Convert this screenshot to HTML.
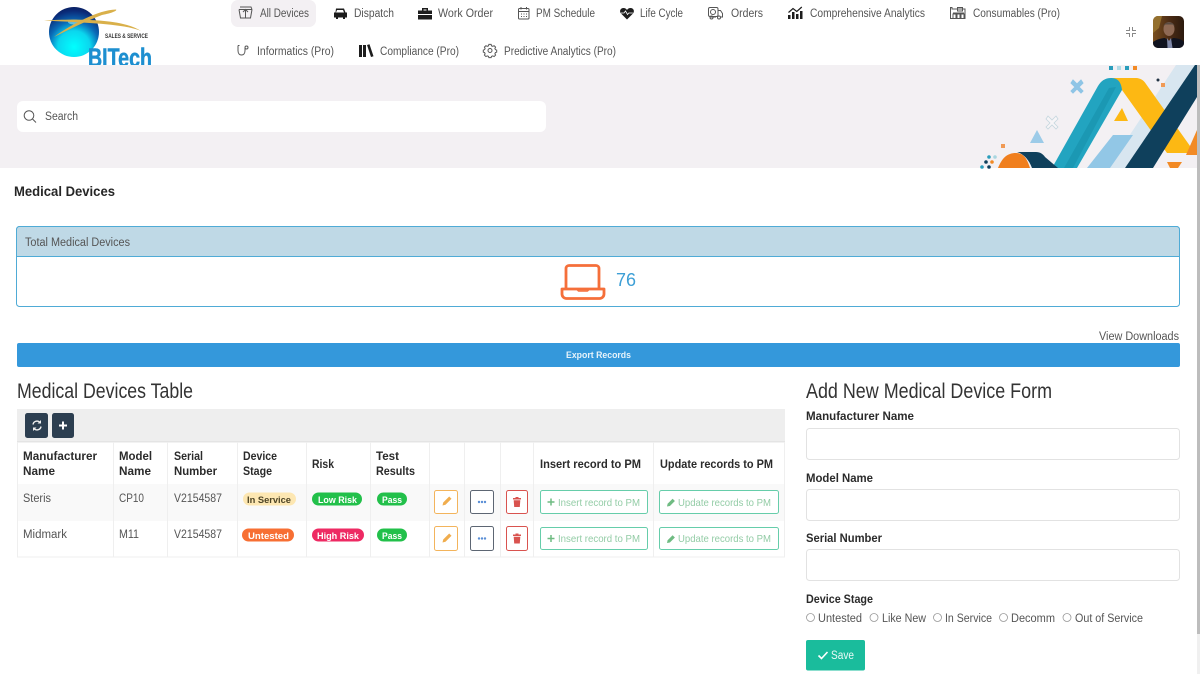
<!DOCTYPE html>
<html lang="en"><head><meta charset="utf-8"><title>Medical Devices</title>
<style>
html,body{margin:0;padding:0;background:#fff;width:1200px;height:674px;overflow:hidden}
svg{display:block;position:absolute;left:0;top:0;filter:blur(.3px)}
text{font-family:"Liberation Sans",Arial,sans-serif;font-size:11.5px;fill:#555}
.n{fill:#555;font-size:11.5px}
.b{font-weight:700;fill:#2b2b2b;font-size:11.5px}
.c{fill:#555;font-size:11.5px}
.bd{font-weight:700;font-size:9.2px;fill:#fff}
.g{fill:#93cca6;font-size:10.5px}
.h{font-size:21px;fill:#333}
.ln{fill:#efefef;stroke:none}
.ic{fill:none;stroke:#555;stroke-width:1}
</style></head><body>
<svg width="1200" height="674" viewBox="0 0 1200 674" xmlns="http://www.w3.org/2000/svg">
<defs>
<radialGradient id="gl" cx=".5" cy=".8" r=".85"><stop offset="0" stop-color="#0ff"/><stop offset=".38" stop-color="#0bd6ee"/><stop offset=".6" stop-color="#0a6cb8"/><stop offset=".85" stop-color="#0a2a78"/><stop offset="1" stop-color="#0a1a55"/></radialGradient>
<linearGradient id="ph" x1="0" y1="0" x2="1" y2="0"><stop offset="0" stop-color="#7a5020"/><stop offset=".55" stop-color="#4a2a14"/><stop offset="1" stop-color="#2c1a0e"/></linearGradient>
<clipPath id="pc"><rect x="1153" y="16" width="31" height="32" rx="5"/></clipPath>
<clipPath id="lc"><rect x="0" y="0" width="300" height="66"/></clipPath>
</defs>

<!-- logo -->
<g clip-path="url(#lc)">
<circle cx="74" cy="32" r="25" fill="url(#gl)"/>
<ellipse cx="74" cy="22" rx="6" ry="2.500" fill="#9fe9f2" opacity=".6"/>
<path d="M44 20.500C72 19 122 18 141 31C124 23.500 80 22.500 44 20.500Z" fill="#d9b04a"/>
<path d="M54 37C72 24 98 10 116 9.500C118 11 108 14 102 15C86 21 70 29 54 37Z" fill="#d9b04a"/>
<text x="105" y="38" style="font-size:6.500px;font-weight:700;fill:#333" textLength="43" lengthAdjust="spacingAndGlyphs">SALES &amp; SERVICE</text>
<text x="88" y="66.500" style="font-size:26px;font-weight:700;fill:#1d8fd0;stroke:#1d8fd0;stroke-width:.5" textLength="64" lengthAdjust="spacingAndGlyphs">BITech</text>
</g>

<!-- nav -->
<rect x="231" y="0" width="85" height="27" rx="7" fill="#f3f0f3"/>
<g class="ic"><path d="M239 9.500h13M239 9.500l1.500 8.500h10l1.500-8.500M240 7h11l1 2.500M245.500 9.500v8.500M243 12l2.500-2.500 2.500 2.500"/></g>
<text class="n" x="260" y="17" textLength="49" lengthAdjust="spacingAndGlyphs">All Devices</text>

<path d="M336 8.500h8l1.500 4h1.500v5h-2v1.500h-2v-1.500h-5v1.500h-2v-1.500h-2v-5h1.500zM337 10l-1 2.500h8l-1-2.500z" fill="#1d1d1d" fill-rule="evenodd"/>
<text class="n" x="354" y="17" textLength="40" lengthAdjust="spacingAndGlyphs">Dispatch</text>

<path d="M422 8h6v2.500h4v3.500h-14v-3.500h4zM423.500 9.500v1h3v-1zM418 15h14v4.500h-14z" fill="#1d1d1d" fill-rule="evenodd"/>
<text class="n" x="438" y="17" textLength="55" lengthAdjust="spacingAndGlyphs">Work Order</text>

<g class="ic"><rect x="518.500" y="8.500" width="10.500" height="10.500" rx="1"/><path d="M518.500 11.500h10.500M521 7v2.500M526.500 7v2.500M521 14h1M523.500 14h1M526 14h1M521 16.500h1M523.500 16.500h1M526 16.500h1"/></g>
<text class="n" x="536" y="17" textLength="59" lengthAdjust="spacingAndGlyphs">PM Schedule</text>

<path d="M627 19.500l-6-6c-2-2.500-.5-5.500 2.500-5.500 1.500 0 2.700.7 3.500 2 .8-1.300 2-2 3.500-2 3 0 4.500 3 2.500 5.500z" fill="#1d1d1d"/>
<path d="M621 13h3l1.500-2 2 3.500 1.300-1.500h4" fill="none" stroke="#fff" stroke-width=".8"/>
<text class="n" x="640" y="17" textLength="43" lengthAdjust="spacingAndGlyphs">Life Cycle</text>

<g class="ic"><rect x="708.500" y="7.500" width="9.500" height="9" rx="1.500"/><circle cx="713" cy="12" r="2.500"/><path d="M718 10.500h2.500l2 3v3.500h-2M710 17h6"/><circle cx="711.500" cy="17.500" r="1.500"/><circle cx="719" cy="17.500" r="1.500"/></g>
<text class="n" x="731" y="17" textLength="32" lengthAdjust="spacingAndGlyphs">Orders</text>

<path d="M788 15h2.500v4H788zM792 12h2.500v7H792zM796 14h2.500v5H796zM800 11h2.500v8H800z" fill="#1d1d1d"/>
<path d="M788.500 12.500l4.500-4 3.800 3 5-4.500" fill="none" stroke="#1d1d1d" stroke-width="1.200"/>
<text class="n" x="810" y="17" textLength="115" lengthAdjust="spacingAndGlyphs">Comprehensive Analytics</text>

<g class="ic"><path d="M950.500 18.500v-11h1.500v1.500h13v9.500zM950.500 18.500h14.500M953 18v-4h3v4M957 18v-4h3v4M961 18v-4h3v4M957.500 11v-3.500h5V11zM953 13h11"/></g>
<text class="n" x="973" y="17" textLength="87" lengthAdjust="spacingAndGlyphs">Consumables (Pro)</text>

<g class="ic"><path d="M238 45.500v5c0 3 1.500 4.500 3.500 4.500s3.500-1.500 3.500-4.500V48"/><circle cx="246.500" cy="47.500" r="1.500"/><path d="M238 45.500h1.500"/></g>
<text class="n" x="257" y="55" textLength="77" lengthAdjust="spacingAndGlyphs">Informatics (Pro)</text>

<path d="M359 45h3v12h-3zM363 45h3v12h-3zM367 45l2.500-.8 4 12-2.500.8z" fill="#1d1d1d"/>
<text class="n" x="380" y="55" textLength="79" lengthAdjust="spacingAndGlyphs">Compliance (Pro)</text>

<g class="ic"><circle cx="490" cy="50.500" r="2"/><path d="M488.900 45h2.200l.4 1.500 1.300.5 1.300-.7 1.500 1.500-.7 1.300.5 1.300 1.300.4v2.200l-1.300.4-.5 1.300.7 1.300-1.500 1.500-1.300-.7-1.300.5-.4 1.300h-2.200l-.4-1.300-1.300-.5-1.300.7-1.500-1.500.7-1.300-.5-1.300-1.300-.4v-2.200l1.300-.4.5-1.300-.7-1.300 1.500-1.500 1.300.7 1.300-.5z" transform="translate(0 -.2) scale(1 .97) translate(0 1)"/></g>
<text class="n" x="504" y="55" textLength="112" lengthAdjust="spacingAndGlyphs">Predictive Analytics (Pro)</text>

<!-- minimize + avatar -->
<path d="M1129.500 27v3.500H1126M1132.500 27v3.500h3.500M1129.500 37v-3.500H1126M1132.500 37v-3.500h3.500" fill="none" stroke="#888" stroke-width="1"/>
<g clip-path="url(#pc)">
<rect x="1153" y="16" width="31" height="32" fill="url(#ph)"/>
<path d="M1153 16h9l-3 12-6 5z" fill="#94702e"/>
<ellipse cx="1169" cy="29" rx="5.500" ry="7" fill="#8f6a55"/>
<path d="M1163.500 26c1-5 10-5 11 0l-2-1.500h-7z" fill="#5a4a40"/>
<path d="M1153 48v-6c4-3 10-4 12-4l4 3 4-3c3 0 9 1 11 4v6z" fill="#10131f"/>
<path d="M1167 38l2 3 2-3 1.500 10h-5z" fill="#7f88a8"/>
</g>

<!-- banner -->
<rect x="0" y="65" width="1197" height="103" fill="#f3f0f3"/>
<path d="M1176 65h21L1125 168h-17z" fill="#d8e6f0"/>
<path d="M1113 135h20l-23 33h-23z" fill="#92c7e6"/>
<path d="M1113 78h22c4 0 8 1 11 6l49 69h-28l-45-63z" fill="#fdb813"/>
<path d="M1052 168l46-82c3-5 7-8 13-8 6 0 10 3 11 12l-45 78z" fill="#22a4c0"/>
<path d="M1064 168l45-80 7-1-43 81z" fill="#1b98b3"/>
<path d="M1125 168l70-103h2v32l-44 71z" fill="#0f405c"/>
<path d="M1197 130v25h-11z" fill="#f28a25"/>
<path d="M1167 162h15l-4 6h-8z" fill="#f28a25"/>
<path d="M998 168c4-10 9-15 18-15 8 0 11 6 14 15z" fill="#f07f1e"/>
<path d="M1017 152h19c4 0 7 2 9 5l13 11h-26c-3-8-8-14-15-16z" fill="#0f405c"/>
<path d="M1037 130l-7 13h14z" fill="#9ccbe8"/>
<path d="M1122 108l-8 13h14z" fill="#fdb813"/>
<path d="M1073 80l4 4 4-4 2 3-4 4 4 4-2 2-4-4-4 4-2-2 4-4-4-4z" fill="#8fc5e6" stroke="#8fc5e6" stroke-width="1"/>
<path d="M1048 116l4 4 4-4 2 3-4 4 4 4-2 2-4-4-4 4-2-2 4-4-4-4z" fill="#f7f5f7" stroke="#c5d6de" stroke-width=".8"/>
<g><rect x="1109" y="66" width="4" height="4" fill="#2a9dbb"/><rect x="1117" y="66" width="4" height="4" fill="#b2dbe6"/><rect x="1125" y="66" width="4" height="4" fill="#2a9dbb"/><rect x="1133" y="66" width="4" height="4" fill="#f28a25"/><rect x="1161" y="83" width="4" height="4" fill="#f09a55"/><circle cx="1158" cy="80" r="1.500" fill="#234"/><rect x="1001" y="144" width="4" height="4" fill="#f09a55"/><circle cx="989" cy="157" r="1.800" fill="#2a9dbb"/><circle cx="995" cy="157" r="1.800" fill="#a9d6e0"/><circle cx="986" cy="162" r="1.800" fill="#0f405c"/><circle cx="992" cy="162" r="1.800" fill="#f28a25"/><circle cx="982" cy="167" r="1.800" fill="#2a9dbb"/><circle cx="989" cy="167" r="1.800" fill="#0f405c"/></g>

<!-- scrollbar -->
<rect x="1197" y="65" width="3" height="569" fill="#bdbdbd"/>
<rect x="1197" y="634" width="3" height="40" fill="#f0f0f0"/>

<!-- search -->
<rect x="17" y="101" width="529" height="31" rx="6" fill="#fff"/>
<circle cx="29" cy="115.500" r="4.800" fill="none" stroke="#555" stroke-width="1"/>
<path d="M32.500 119l3.500 3.500" stroke="#555" stroke-width="1"/>
<text class="c" x="45" y="120" textLength="33" lengthAdjust="spacingAndGlyphs">Search</text>

<text x="14" y="196" style="font-weight:700;font-size:13.5px;fill:#262626" textLength="101" lengthAdjust="spacingAndGlyphs">Medical Devices</text>

<!-- card -->
<rect x="16.500" y="226.500" width="1163" height="80" rx="3" fill="#fff" stroke="#4fabd6"/>
<path d="M16.500 256.500v-27a3 3 0 0 1 3-3h1157a3 3 0 0 1 3 3v27z" fill="#bfd9e6" stroke="#4fabd6"/>
<text class="c" x="25" y="246" textLength="105" lengthAdjust="spacingAndGlyphs">Total Medical Devices</text>
<g fill="none" stroke="#f56f3a" stroke-width="2.800" stroke-linejoin="round"><path d="M566 288.500v-20a3 3 0 0 1 3-3h27a3 3 0 0 1 3 3v20"/><path d="M562 289h42v5a4.500 4.500 0 0 1-4.500 4.500h-33a4.500 4.500 0 0 1-4.500-4.500z"/><path d="M577 289.500l1.500 1.500h9l1.500-1.500" stroke-width="1.500"/></g>
<text x="616" y="286" style="font-size:18px;fill:#3d9fd6" textLength="20" lengthAdjust="spacingAndGlyphs">76</text>

<text class="c" x="1099" y="340" textLength="80" lengthAdjust="spacingAndGlyphs">View Downloads</text>
<rect x="17" y="343" width="1163" height="24" rx="2" fill="#3498db"/>
<text x="566" y="358" style="font-size:9px;font-weight:700;fill:#e6f3fb" textLength="65" lengthAdjust="spacingAndGlyphs">Export Records</text>

<text class="h" x="17" y="398" textLength="176" lengthAdjust="spacingAndGlyphs">Medical Devices Table</text>
<text class="h" x="806" y="398" textLength="246" lengthAdjust="spacingAndGlyphs">Add New Medical Device Form</text>

<!-- table -->
<rect x="17" y="409" width="768" height="33" fill="#eeeeee"/>
<rect x="17" y="441" width="768" height="1.500" fill="#e4e4e4"/>
<rect x="17" y="484" width="768" height="37" fill="#f9f9f9"/>
<g class="ln">
<rect x="17" y="442" width="1" height="115"/><rect x="113" y="442" width="1" height="115"/><rect x="167" y="442" width="1" height="115"/><rect x="237" y="442" width="1" height="115"/><rect x="306" y="442" width="1" height="115"/><rect x="370" y="442" width="1" height="115"/><rect x="429" y="442" width="1" height="115"/><rect x="464" y="442" width="1" height="115"/><rect x="500" y="442" width="1" height="115"/><rect x="533" y="442" width="1" height="115"/><rect x="653" y="442" width="1" height="115"/><rect x="784" y="442" width="1" height="115"/>
<rect x="17" y="556.500" width="768" height="1"/>
</g>
<rect x="25" y="413" width="23" height="25" rx="2.500" fill="#2c3e50"/>
<rect x="52" y="413" width="22" height="25" rx="2.500" fill="#2c3e50"/>
<path d="M33 424.500a4 4 0 0 1 6.500-2.500M41 426.500a4 4 0 0 1-6.500 2.500" fill="none" stroke="#f0f0f0" stroke-width="1.400"/>
<path d="M41 420v3.500h-3.500zM33 431v-3.500h3.500z" fill="#f0f0f0"/>
<path d="M63 421.500v8M59 425.500h8" stroke="#fff" stroke-width="2"/>

<text class="b" x="23" y="460" textLength="74" lengthAdjust="spacingAndGlyphs">Manufacturer</text>
<text class="b" x="23" y="475" textLength="32" lengthAdjust="spacingAndGlyphs">Name</text>
<text class="b" x="119" y="460" textLength="33" lengthAdjust="spacingAndGlyphs">Model</text>
<text class="b" x="119" y="475" textLength="32" lengthAdjust="spacingAndGlyphs">Name</text>
<text class="b" x="174" y="460" textLength="29" lengthAdjust="spacingAndGlyphs">Serial</text>
<text class="b" x="174" y="475" textLength="43" lengthAdjust="spacingAndGlyphs">Number</text>
<text class="b" x="243" y="460" textLength="34" lengthAdjust="spacingAndGlyphs">Device</text>
<text class="b" x="243" y="475" textLength="29" lengthAdjust="spacingAndGlyphs">Stage</text>
<text class="b" x="312" y="468" textLength="22" lengthAdjust="spacingAndGlyphs">Risk</text>
<text class="b" x="376" y="460" textLength="23" lengthAdjust="spacingAndGlyphs">Test</text>
<text class="b" x="376" y="475" textLength="39" lengthAdjust="spacingAndGlyphs">Results</text>
<text class="b" x="540" y="468" textLength="101" lengthAdjust="spacingAndGlyphs">Insert record to PM</text>
<text class="b" x="660" y="468" textLength="113" lengthAdjust="spacingAndGlyphs">Update records to PM</text>

<text class="c" x="23" y="502" textLength="28" lengthAdjust="spacingAndGlyphs">Steris</text>
<text class="c" x="119" y="502" textLength="25" lengthAdjust="spacingAndGlyphs">CP10</text>
<text class="c" x="174" y="502" textLength="48" lengthAdjust="spacingAndGlyphs">V2154587</text>
<text class="c" x="23" y="538" textLength="44" lengthAdjust="spacingAndGlyphs">Midmark</text>
<text class="c" x="119" y="538" textLength="20" lengthAdjust="spacingAndGlyphs">M11</text>
<text class="c" x="174" y="538" textLength="48" lengthAdjust="spacingAndGlyphs">V2154587</text>

<!-- badges -->
<rect x="243" y="492.500" width="53" height="13" rx="6.500" fill="#fde7b2"/>
<text x="247" y="503" style="font-size:9.2px;font-weight:700;fill:#4e4526" textLength="44" lengthAdjust="spacingAndGlyphs">In Service</text>
<rect x="312" y="492.500" width="50" height="13" rx="6.500" fill="#22c04a"/>
<text class="bd" x="318" y="503" textLength="39" lengthAdjust="spacingAndGlyphs">Low Risk</text>
<rect x="377" y="492.500" width="30" height="13" rx="6.500" fill="#22c04a"/>
<text class="bd" x="382" y="503" textLength="20" lengthAdjust="spacingAndGlyphs">Pass</text>
<rect x="242" y="528.500" width="52" height="13" rx="6.500" fill="#f76f33"/>
<text class="bd" x="248" y="539" textLength="41" lengthAdjust="spacingAndGlyphs">Untested</text>
<rect x="312" y="528.500" width="52" height="13" rx="6.500" fill="#ee2a63"/>
<text class="bd" x="317" y="539" textLength="42" lengthAdjust="spacingAndGlyphs">High Risk</text>
<rect x="377" y="528.500" width="30" height="13" rx="6.500" fill="#22c04a"/>
<text class="bd" x="382" y="539" textLength="20" lengthAdjust="spacingAndGlyphs">Pass</text>

<!-- row actions row1 -->
<g>
<rect x="434.500" y="490.500" width="23" height="23" rx="2" fill="#fff" stroke="#f3b45c"/>
<path d="M442.500 505.500l.7-3 6-6 2.300 2.300-6 6z" fill="#f0ad4e"/>
<rect x="470.500" y="490.500" width="23" height="23" rx="2" fill="#fff" stroke="#5d6673"/>
<g fill="#5b8fd6"><circle cx="479" cy="502" r="1.200"/><circle cx="482" cy="502" r="1.200"/><circle cx="485" cy="502" r="1.200"/></g>
<rect x="506.500" y="490.500" width="21" height="23" rx="2" fill="#fff" stroke="#d9534f"/>
<path d="M513 498h8v1.500h-8zM515.500 497h3v1h-3zM513.700 500.200h6.600l-.5 6.800h-5.600z" fill="#d9534f"/>
<rect x="540.500" y="490.500" width="107" height="23" rx="2" fill="#fff" stroke="#66cdaa"/>
<path d="M551 498.500v7M547.500 502h7" stroke="#6fbb82" stroke-width="1.500"/>
<text class="g" x="558" y="506" textLength="82" lengthAdjust="spacingAndGlyphs">Insert record to PM</text>
<rect x="659.500" y="490.500" width="119" height="23" rx="2" fill="#fff" stroke="#66cdaa"/>
<path d="M667 506.500l.6-2.800 5-5 2.300 2.300-5 5z" fill="#6fbb82"/>
<text class="g" x="678" y="506" textLength="93" lengthAdjust="spacingAndGlyphs">Update records to PM</text>
</g>
<!-- row actions row2 -->
<g>
<rect x="434.500" y="526.500" width="23" height="24" rx="2" fill="#fff" stroke="#f3b45c"/>
<path d="M442.500 542.500l.7-3 6-6 2.300 2.300-6 6z" fill="#f0ad4e"/>
<rect x="470.500" y="526.500" width="23" height="24" rx="2" fill="#fff" stroke="#5d6673"/>
<g fill="#5b8fd6"><circle cx="479" cy="538.500" r="1.200"/><circle cx="482" cy="538.500" r="1.200"/><circle cx="485" cy="538.500" r="1.200"/></g>
<rect x="506.500" y="526.500" width="21" height="24" rx="2" fill="#fff" stroke="#d9534f"/>
<path d="M513 534.500h8v1.500h-8zM515.500 533.500h3v1h-3zM513.700 536.700h6.600l-.5 6.800h-5.600z" fill="#d9534f"/>
<rect x="540.500" y="527.500" width="107" height="22" rx="2" fill="#fff" stroke="#66cdaa"/>
<path d="M551 535v7M547.500 538.500h7" stroke="#6fbb82" stroke-width="1.500"/>
<text class="g" x="558" y="542" textLength="82" lengthAdjust="spacingAndGlyphs">Insert record to PM</text>
<rect x="659.500" y="527.500" width="119" height="22" rx="2" fill="#fff" stroke="#66cdaa"/>
<path d="M667 543l.6-2.800 5-5 2.300 2.300-5 5z" fill="#6fbb82"/>
<text class="g" x="678" y="542" textLength="93" lengthAdjust="spacingAndGlyphs">Update records to PM</text>
</g>

<!-- form -->
<text class="b" x="806" y="420" textLength="108" lengthAdjust="spacingAndGlyphs">Manufacturer Name</text>
<rect x="806.500" y="428.500" width="373" height="31" rx="3" fill="#fff" stroke="#e2e2e2"/>
<text class="b" x="806" y="482" textLength="67" lengthAdjust="spacingAndGlyphs">Model Name</text>
<rect x="806.500" y="489.500" width="373" height="31" rx="3" fill="#fff" stroke="#e2e2e2"/>
<text class="b" x="806" y="542" textLength="76" lengthAdjust="spacingAndGlyphs">Serial Number</text>
<rect x="806.500" y="549.500" width="373" height="31" rx="3" fill="#fff" stroke="#e2e2e2"/>
<text class="b" x="806" y="603" textLength="67" lengthAdjust="spacingAndGlyphs">Device Stage</text>
<g fill="#fff" stroke="#999" stroke-width=".8"><circle cx="810.500" cy="617.500" r="4"/><circle cx="874" cy="617.500" r="4"/><circle cx="937.500" cy="617.500" r="4"/><circle cx="1003.500" cy="617.500" r="4"/><circle cx="1067" cy="617.500" r="4"/></g>
<text class="c" x="818" y="622" textLength="44" lengthAdjust="spacingAndGlyphs">Untested</text>
<text class="c" x="882" y="622" textLength="44" lengthAdjust="spacingAndGlyphs">Like New</text>
<text class="c" x="945" y="622" textLength="47" lengthAdjust="spacingAndGlyphs">In Service</text>
<text class="c" x="1011" y="622" textLength="44" lengthAdjust="spacingAndGlyphs">Decomm</text>
<text class="c" x="1075" y="622" textLength="68" lengthAdjust="spacingAndGlyphs">Out of Service</text>
<rect x="806" y="640" width="59" height="30.500" rx="2" fill="#1abc9c"/>
<path d="M818.500 655.500l3 3 6-6.500" fill="none" stroke="#fff" stroke-width="1.600"/>
<text x="831" y="659" style="font-size:11.5px;fill:#eafaf6" textLength="23" lengthAdjust="spacingAndGlyphs">Save</text>
</svg>
</body></html>
